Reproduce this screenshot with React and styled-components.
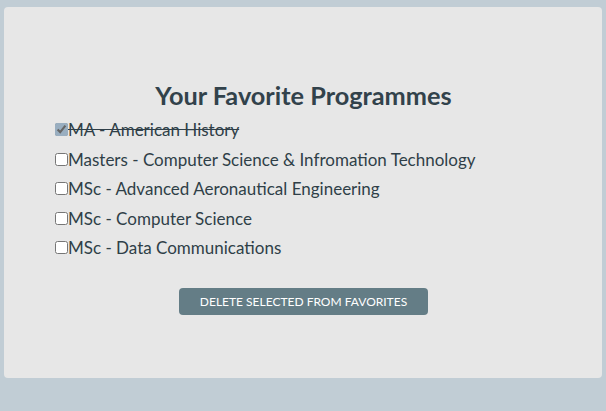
import { useState } from 'react';
import styled, { createGlobalStyle } from 'styled-components';

const GlobalStyle = createGlobalStyle`
  html, body {
    margin: 0;
    padding: 0;
    background: #c1cdd5;
  }
  body {
    font-family: Lato, "Open Sans", sans-serif;
    color: #2f3f48;
  }
`;

const Page = styled.div`
  padding: 7px 4px 0 4px;
  height: 411px;
  box-sizing: border-box;
`;

const Card = styled.section`
  background: #e7e7e7;
  border-radius: 4px;
  height: 371px;
  box-sizing: border-box;
  padding: 73px 50px 0 51px;
`;

const Title = styled.h2`
  margin: 0 0 5px;
  text-align: center;
  font-size: 25.3px;
  font-weight: 700;
  line-height: 30px;
  color: #32424b;
`;

const List = styled.ul`
  list-style: none;
  margin: 0;
  padding: 0;
`;

const Item = styled.li`
  display: flex;
  align-items: center;
  height: 29.5px;
  font-size: 17px;
  text-decoration: ${({ $done }) => ($done ? 'line-through' : 'none')};
`;

const Check = styled.input`
  width: 13px;
  height: 13px;
  margin: 0;
  accent-color: #7f9bb3;
  opacity: ${({ checked }) => (checked ? 0.75 : 1)};
`;

const Actions = styled.div`
  display: flex;
  justify-content: center;
  margin-top: 25px;
`;

const Button = styled.button`
  background: #647d86;
  color: #fff;
  border: none;
  border-radius: 4px;
  width: 249px;
  height: 27px;
  font-family: inherit;
  font-size: 12px;
  text-transform: uppercase;
  cursor: pointer;
`;

const programmes = [
  'MA - American History',
  'Masters - Computer Science & Infromation Technology',
  'MSc - Advanced Aeronautical Engineering',
  'MSc - Computer Science',
  'MSc - Data Communications',
];

export default function App() {
  const [selected, setSelected] = useState([0]);

  const toggle = (i) =>
    setSelected((s) => (s.includes(i) ? s.filter((x) => x !== i) : [...s, i]));

  return (
    <Page>
      <GlobalStyle />
      <Card>
        <Title>Your Favorite Programmes</Title>
        <List>
          {programmes.map((name, i) => (
            <Item key={name} $done={selected.includes(i)}>
              <Check
                type="checkbox"
                checked={selected.includes(i)}
                onChange={() => toggle(i)}
              />
              {name}
            </Item>
          ))}
        </List>
        <Actions>
          <Button>Delete selected from favorites</Button>
        </Actions>
      </Card>
    </Page>
  );
}
